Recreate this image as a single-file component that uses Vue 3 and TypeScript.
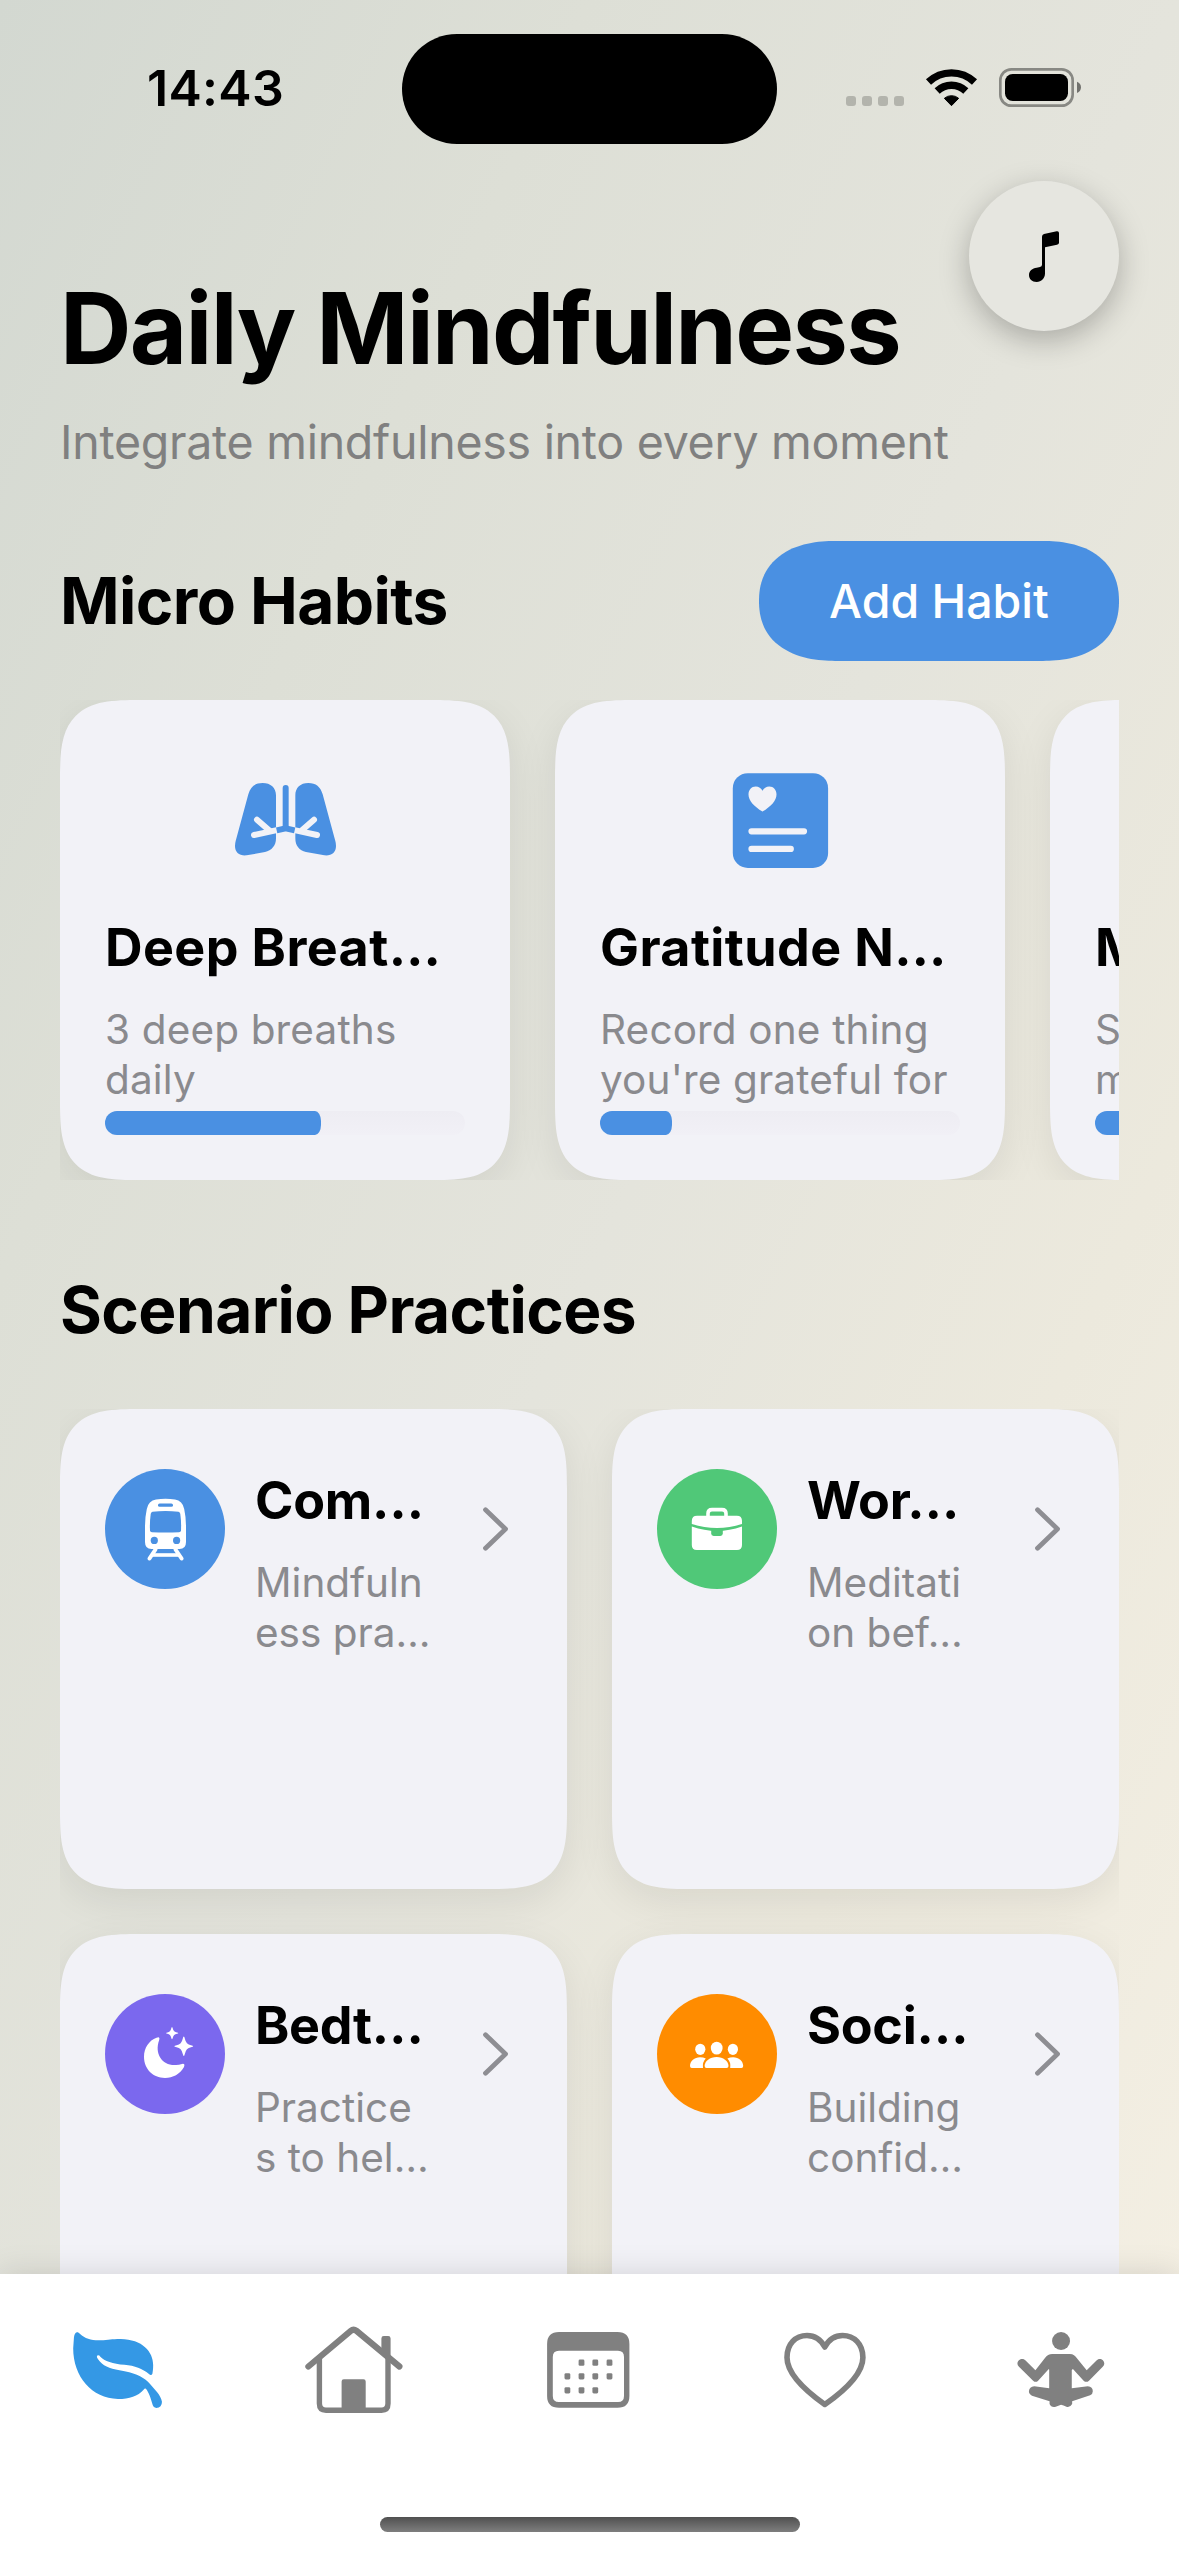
<script setup lang="ts">
type HabitIcon = 'lungs' | 'note' | 'none'
type PracticeIcon = 'train' | 'briefcase' | 'moon' | 'people'

interface Habit {
  icon: HabitIcon
  title: string
  detail: string
  progress: number
}

interface Practice {
  icon: PracticeIcon
  title: string
  detail: string
  color: string
}

const habits: Habit[] = [
  { icon: 'lungs', title: 'Deep Breat…', detail: '3 deep breaths\ndaily', progress: 60 },
  { icon: 'note', title: 'Gratitude N…', detail: "Record one thing\nyou're grateful for", progress: 20 },
  { icon: 'none', title: 'Mindful…', detail: 'Stay\nmindful', progress: 40 },
]

const practices: Practice[] = [
  { icon: 'train', title: 'Com…', detail: 'Mindfuln\ness pra…', color: '#4a90e2' },
  { icon: 'briefcase', title: 'Wor…', detail: 'Meditati\non bef…', color: '#50c878' },
  { icon: 'moon', title: 'Bedt…', detail: 'Practice\ns to hel…', color: '#7b68ee' },
  { icon: 'people', title: 'Soci…', detail: 'Building\nconfid…', color: '#ff8c00' },
]

const calendarDots: [number, number][] = [
  [52.5, 52.7], [66.3, 52.7], [80.5, 52.7],
  [38.4, 66.3], [52.5, 66.3], [66.3, 66.3], [80.5, 66.3],
  [38.4, 80.3], [52.5, 80.3], [66.3, 80.3],
]
</script>

<template>
  <div class="screen">
    <header class="status">
      <div class="time">14:43</div>
      <div class="island"></div>
      <svg class="indicators" viewBox="78 84 705 117">
        <g fill="#000" opacity="0.2">
          <rect x="78" y="168" width="30" height="30" rx="9" />
          <rect x="126" y="168" width="30" height="30" rx="9" />
          <rect x="174" y="168" width="30" height="30" rx="9" />
          <rect x="222" y="168" width="30" height="30" rx="9" />
        </g>
        <g fill="none" stroke="#000" stroke-width="22">
          <path d="M325.5 126A100 100 0 0 1 463.5 126" />
          <path d="M351.5 153A62 62 0 0 1 437.5 153" />
        </g>
        <path d="M394.5 197L373 175A33 33 0 0 1 416 175Z" stroke="#000" stroke-width="3" stroke-linejoin="round" />
        <rect x="541" y="88" width="217" height="109" rx="33" fill="none" stroke="#000" stroke-opacity="0.4" stroke-width="8" />
        <rect x="555" y="102" width="189" height="81" rx="23" />
        <path d="M771 125C779 128 783 134 783 142C783 150 779 156 771 159Z" opacity="0.5" />
      </svg>
    </header>

    <button class="music" aria-label="Music">
      <svg viewBox="447 423 450 450">
        <path d="M666 590Q666 584 672 582L710 574Q717 573 717 579V608Q717 613 711 614L675 622V700C675 716 664 726 650 726C636 726 627 717 627 705C627 692 637 685 650 683L660 681Q666 679 666 674Z" />
      </svg>
    </button>

    <main class="content">
      <h1 class="title">Daily Mindfulness</h1>
      <p class="subtitle">Integrate mindfulness into every moment</p>

      <div class="section-row">
        <h2 class="micro">Micro Habits</h2>
        <button class="add">Add Habit</button>
      </div>

      <div class="habits">
        <article v-for="habit in habits" :key="habit.title" class="card habit">
          <svg v-if="habit.icon === 'lungs'" class="habit-icon" viewBox="30 -45 450 450">
            <g fill="#4a90e2">
              <path d="M145 103C152 80 165 69 188 69C212 69 228 83 228 106V235C228 258 215 271 195 276L140 286C118 288 105 277 105 258Q105 250 107 243Z" />
              <path d="M368 103C361 80 348 69 325 69C301 69 286 83 286 106V235C286 258 298 271 318 276L373 286C395 288 408 277 408 258Q408 250 406 243Z" />
            </g>
            <g fill="none" stroke="#f2f2f7" stroke-width="18" stroke-linecap="round">
              <path d="M162 225L227 211M171 179L209 212" />
              <path d="M351 225L287 211M342 179L304 212" />
            </g>
            <path d="M229 202H285V221H229Z" fill="#f2f2f7" />
            <g fill="none" stroke="#4a90e2" stroke-width="18">
              <path d="M230 211L257 205L284 211" />
              <path d="M257 84V202" stroke-linecap="round" />
            </g>
          </svg>
          <svg v-else-if="habit.icon === 'note'" class="habit-icon" viewBox="0 0 150 150">
            <rect x="27.8" y="28.2" width="95.3" height="94.7" rx="15" fill="#4a90e2" />
            <path d="M57.5 66.6C49 61.5 43.5 55.5 43.5 49.5C43.5 45 46.5 41.6 50.7 41.6C53.8 41.6 56.2 43.2 57.5 45.8C58.8 43.2 61.2 41.6 64.3 41.6C68.5 41.6 71.5 45 71.5 49.5C71.5 55.5 66 61.5 57.5 66.6Z" fill="#f2f2f7" />
            <path d="M46.5 86.3H99M46.5 103.9H85.8" fill="none" stroke="#f2f2f7" stroke-width="6.2" stroke-linecap="round" />
          </svg>
          <div v-else class="habit-icon"></div>
          <h3 class="card-title">{{ habit.title }}</h3>
          <p class="card-detail">{{ habit.detail }}</p>
          <div class="track">
            <div class="fill" :style="{ width: habit.progress + '%' }"></div>
          </div>
        </article>
      </div>

      <h2 class="scenario">Scenario Practices</h2>

      <div class="practices">
        <article v-for="practice in practices" :key="practice.title" class="card practice">
          <div class="badge" :style="{ background: practice.color }">
            <svg v-if="practice.icon === 'train'" viewBox="0 0 120 120">
              <path d="M51 30.5Q60.5 28.8 70 30.5Q77.5 31.5 79.2 40Q81 48 81 58V73Q81 80 74.5 80H46.5Q40 80 40 73V58Q40 48 41.8 40Q43.5 31.5 51 30.5Z" fill="#fff" />
              <g fill="#4a90e2">
                <rect x="53" y="34.6" width="15" height="3.2" rx="1.6" />
                <path d="M47.5 42.8Q60.5 41.4 73.5 42.8Q75 43 75.3 45Q76.4 53 76 61.5Q75.9 63 74 63.2Q60.5 64 47 63.2Q45.1 63 45 61.5Q44.6 53 45.7 45Q46 43 47.5 42.8Z" />
                <circle cx="49.3" cy="71.4" r="3.6" />
                <circle cx="71.6" cy="71.4" r="3.6" />
              </g>
              <path d="M50.5 80.5L44.5 89.5M70.5 80.5L76.6 89.5" stroke="#fff" stroke-width="4" stroke-linecap="round" />
              <path d="M47 86H74" stroke="#fff" stroke-width="3.6" />
            </svg>
            <svg v-else-if="practice.icon === 'briefcase'" viewBox="0 0 120 120">
              <path d="M51 48V44.5Q51 40.6 55 40.6H65Q69 40.6 69 44.5V48" fill="none" stroke="#fff" stroke-width="3.6" />
              <path d="M34.8 53.5V52Q34.8 46.8 40 46.8H79.9Q85 46.8 85 52V55Q60 63 34.8 55Z" fill="#fff" />
              <path d="M34.8 57.5Q60 66.4 85 57.5V76Q85 81 80 81H39.8Q34.8 81 34.8 76Z" fill="#fff" />
              <path d="M54.2 61H65.8V64.5Q65.8 66.9 63.4 66.9H56.6Q54.2 66.9 54.2 64.5Z" fill="#50c878" />
            </svg>
            <svg v-else-if="practice.icon === 'moon'" viewBox="0 0 120 120" fill="#fff">
              <path d="M51.5 43.8Q55.2 42 54.2 46C49 60 57.5 72 71 71Q74 70.8 77 69.9Q80.4 69.2 79 73C75 80 68 84 60 84C48 84 39 75 39 62.8C39 54 44 46.5 51.5 43.8Z" />
              <path d="M67 33Q67.5 33 67.8 34.5Q68.5 38 72 38.5Q73.3 38.8 73.3 39.2Q73.3 39.6 72 39.8Q68.5 40.5 67.8 43.8Q67.5 45.2 67 45.2Q66.5 45.2 66.2 43.8Q65.5 40.5 62.4 39.8Q61.1 39.6 61.1 39.2Q61.1 38.8 62.4 38.5Q65.5 38 66.2 34.5Q66.5 33 67 33Z" />
              <path d="M78.8 42.6Q79.4 42.6 79.8 44.6Q81 50.5 86 51.3Q88.2 51.7 88.2 52.2Q88.2 52.8 86 53.2Q81 54 79.8 60Q79.4 61.9 78.8 61.9Q78.2 61.9 77.8 60Q76.6 54 71.6 53.2Q69.3 52.8 69.3 52.2Q69.3 51.7 71.6 51.3Q76.6 50.5 77.8 44.6Q78.2 42.6 78.8 42.6Z" />
            </svg>
            <svg v-else viewBox="0 0 120 120" fill="#fff">
              <ellipse cx="43.3" cy="55.3" rx="5.1" ry="5.6" />
              <ellipse cx="75.9" cy="55.3" rx="5.1" ry="5.6" />
              <ellipse cx="59.7" cy="54.1" rx="5.9" ry="6.4" />
              <path d="M47.6 72C47.6 67 53 63 59.6 63C66.2 63 71.5 67 71.5 72Q71.5 74 69.6 74H49.5Q47.6 74 47.6 72Z" />
              <path d="M33 72C33 67 37.5 63.2 43 63.2Q46.2 63.2 48.8 64.5Q45.2 68 46 74H34.8Q33 74 33 72Z" />
              <path d="M86.2 72C86.2 67 81.7 63.2 76.2 63.2Q73 63.2 70.4 64.5Q74 68 73.2 74H84.4Q86.2 74 86.2 72Z" />
            </svg>
          </div>
          <div class="practice-text">
            <h3 class="card-title">{{ practice.title }}</h3>
            <p class="card-detail">{{ practice.detail }}</p>
          </div>
          <svg class="chevron" viewBox="0 0 32 48">
            <path d="M5.5 4.8L25.5 24L5.5 43.2" fill="none" stroke="#8e8e93" stroke-width="4.8" stroke-linecap="round" stroke-linejoin="round" />
          </svg>
        </article>
      </div>
    </main>

    <nav class="tabs">
      <div class="tab-row">
        <svg viewBox="0 0 120 120">
          <g transform="translate(-57.9 -50) scale(.38266 .33333)">
            <path fill="#3498e5" d="M193 232C195 216 202 213 209 222C222 236 240 242 262 241C285 240 290 237 315 237C372 238 400 275 400 315C400 328 399 335 398 341Q395 348 389 342C372 325 352 317 325 314C295 312 272 303 262 290Q258 283 253 287Q252 292 256 298C268 318 285 326 312 331C350 338 370 348 387 366C405 390 420 405 423 425Q423 442 408 444Q401 444 399 436C394 415 388 395 381 386Q378 384 375 389C360 408 338 417 308 417C240 416 191 350 191 265Z" />
          </g>
        </svg>
        <svg viewBox="0 0 120 120">
          <g fill="none" stroke="#808080">
            <path d="M14.4 56.5L56.8 20.8Q59.5 18.6 62.4 20.8L105.4 56.5" stroke-width="6.2" stroke-linecap="round" />
            <path d="M25.4 47V93.5Q25.4 100.2 32 100.2H87.5Q94 100.2 94 93.5V47" stroke-width="5.4" />
          </g>
          <path d="M47.6 71.5Q47.6 69.3 49.8 69.3H69.5Q71.7 69.3 71.7 71.5V100H47.6ZM87.4 28.4Q87.4 26 89.8 26H94.2Q96.6 26 96.6 28.4V50L87.4 42Z" fill="#808080" />
        </svg>
        <svg viewBox="0 0 120 120">
          <path fill="#808080" fill-rule="evenodd" d="M30 22H88.5Q100.4 22 100.4 34V86Q100.4 97.8 88.5 97.8H30Q18.1 97.8 18.1 86V34Q18.1 22 30 22ZM30 40.7Q23.8 40.7 23.8 47V86Q23.8 92.1 30 92.1H89Q95 92.1 95 86V47Q95 40.7 89 40.7Z" />
          <rect v-for="(dot, i) in calendarDots" :key="i" :x="dot[0] - 2.9" :y="dot[1] - 3.1" width="5.8" height="6.2" rx="1.4" fill="#808080" />
        </svg>
        <svg viewBox="0 0 120 120">
          <path d="M59.8 94.5C38 79 22 62 22 47.5C22 34 30.5 25.5 42 25.5C50 25.5 56 30 59.8 37C63.6 30 69.6 25.5 77.6 25.5C89 25.5 97.9 34 97.9 47.5C97.9 62 82 79 59.8 94.5Z" fill="none" stroke="#808080" stroke-width="5.6" stroke-linejoin="round" />
        </svg>
        <svg viewBox="0 0 120 120">
          <g transform="translate(-422.1 -50) scale(.38266 .33333)" fill="#808080">
            <ellipse cx="1260" cy="243" rx="23.5" ry="27" />
            <path d="M1237 282H1283C1292 282 1297 287 1301 294L1327 331L1352 302C1360 292 1373 299 1373 311Q1373 316 1369 320L1333 362Q1326 369 1319 362L1291 327L1288 330V385L1330 379Q1343 380 1343 394Q1343 403 1336 406L1289 424V432Q1284 443 1274 440Q1266 436 1260 434Q1253 437 1246 440Q1234 443 1230 432V424L1184 407Q1176 403 1176 394Q1177 380 1190 379L1229 385V329L1228 327L1200 362Q1194 369 1187 362L1150 320Q1146 316 1146 311C1146 299 1160 292 1168 302L1193 331L1218 294C1223 286 1229 282 1237 282Z" />
          </g>
        </svg>
      </div>
      <div class="home-indicator"></div>
    </nav>
  </div>
</template>

<style>
body {
  margin: 0;
  overflow: hidden;
}
</style>

<style scoped>
.screen {
  position: relative;
  display: flex;
  flex-direction: column;
  width: 1179px;
  height: 2556px;
  overflow: hidden;
  background: linear-gradient(to bottom right, #d3d8d1 0%, #dddfd6 25%, #e4e4dc 50%, #ece9dd 72%, #f5f0e4 100%);
  font-family: Inter, 'Liberation Sans', sans-serif;
  color: #000;
}

h1,
h2,
h3,
p {
  margin: 0;
}

button {
  border: 0;
  padding: 0;
  font: inherit;
}

.status {
  display: flex;
  flex: none;
  align-items: flex-start;
  height: 177px;
}

.time {
  width: 255px;
  margin: 58px 0 0 147px;
  font-size: 50px;
  font-weight: 600;
  line-height: 60px;
  letter-spacing: 0.3px;
  white-space: nowrap;
}

.island {
  width: 375px;
  height: 110px;
  margin-top: 34px;
  border-radius: 55px;
  background: #000;
}

.indicators {
  width: 235px;
  height: 39px;
  margin: 68px 0 0 69px;
}

.music {
  position: absolute;
  top: 181px;
  right: 60px;
  width: 150px;
  height: 150px;
  border-radius: 50%;
  background: #e6e6e0;
  box-shadow: 0 9px 30px rgba(0, 0, 0, 0.26);
}

.music svg {
  display: block;
  width: 150px;
  height: 150px;
}

.content {
  display: flex;
  flex-direction: column;
  flex: none;
  height: 2097px;
  padding: 91px 60px 0;
  box-sizing: border-box;
  overflow: hidden;
}

.title {
  font-size: 99px;
  font-weight: 700;
  line-height: 120px;
  letter-spacing: -1.72px;
  white-space: nowrap;
}

.subtitle {
  margin-top: 24px;
  font-size: 46.5px;
  line-height: 60px;
  letter-spacing: -0.27px;
  color: #808080;
  white-space: nowrap;
}

.section-row {
  display: flex;
  align-items: center;
  justify-content: space-between;
  height: 120px;
  margin-top: 69px;
}

.micro,
.scenario {
  font-size: 64px;
  font-weight: 700;
  line-height: 79px;
  letter-spacing: -0.6px;
  white-space: nowrap;
}

.micro {
  padding-bottom: 2px;
}

.add {
  width: 360px;
  height: 120px;
  border-radius: 60px;
  background: #4a90e2;
  color: #fff;
  font-size: 46.5px;
  font-weight: 500;
}

.habits {
  display: flex;
  flex: none;
  gap: 45px;
  height: 480px;
  margin-top: 39px;
  overflow: hidden;
}

.card {
  box-sizing: border-box;
  border-radius: 54px;
  background: #f2f2f7;
  box-shadow: 0 12px 40px rgba(0, 0, 0, 0.08);
}

@supports (corner-shape: superellipse(1.5)) {
  .card {
    border-radius: 80px;
    corner-shape: superellipse(1.65);
  }

  .add {
    border-radius: 76px / 60px;
    corner-shape: superellipse(1.2);
  }
}

.habit {
  display: flex;
  flex: none;
  flex-direction: column;
  width: 450px;
  height: 480px;
  padding: 45px;
}

.habit-icon {
  flex: none;
  align-self: center;
  width: 150px;
  height: 150px;
}

.card-title {
  font-size: 52px;
  font-weight: 700;
  line-height: 64px;
  white-space: nowrap;
}

.habit .card-title {
  margin-top: 21px;
  letter-spacing: 0.4px;
}

.practice .card-title {
  letter-spacing: -0.3px;
}

.card-detail {
  margin-top: 25px;
  font-size: 40.5px;
  line-height: 50px;
  color: #8a8a8e;
  white-space: pre;
}

.habit .card-detail {
  letter-spacing: 0.15px;
}

.track {
  flex: none;
  height: 24px;
  margin-top: 6px;
  overflow: hidden;
  border-radius: 12px;
  background: linear-gradient(#eeedf3, #f1f0f6);
}

.fill {
  height: 24px;
  border-radius: 0 6px 6px 0 / 0 10px 10px 0;
  background: #4a90e2;
}

.scenario {
  margin-top: 90px;
}

.practices {
  display: grid;
  flex: none;
  grid-template-columns: 507px 507px;
  grid-auto-rows: 480px;
  gap: 45px;
  height: 1005px;
  margin-top: 60px;
  overflow: hidden;
}

.practice {
  display: flex;
  align-items: flex-start;
  padding: 60px 45px;
}

.badge {
  flex: none;
  width: 120px;
  height: 120px;
  border-radius: 50%;
}

.badge svg {
  display: block;
  width: 120px;
  height: 120px;
}

.practice-text {
  width: 180px;
  margin-left: 30px;
}

.chevron {
  width: 32px;
  height: 48px;
  margin: 36px 0 0 45px;
}

.tabs {
  position: relative;
  flex: none;
  height: 282px;
  background: #fff;
  box-shadow: 0 0 30px rgba(0, 0, 0, 0.13);
}

.tab-row {
  display: flex;
  justify-content: space-around;
  padding: 36px 0 0;
}

.tab-row svg {
  width: 120px;
  height: 120px;
}

.home-indicator {
  width: 420px;
  height: 15px;
  margin: 87px auto 0;
  border-radius: 8px;
  background: linear-gradient(#505050, #7e7e7e);
}
</style>
